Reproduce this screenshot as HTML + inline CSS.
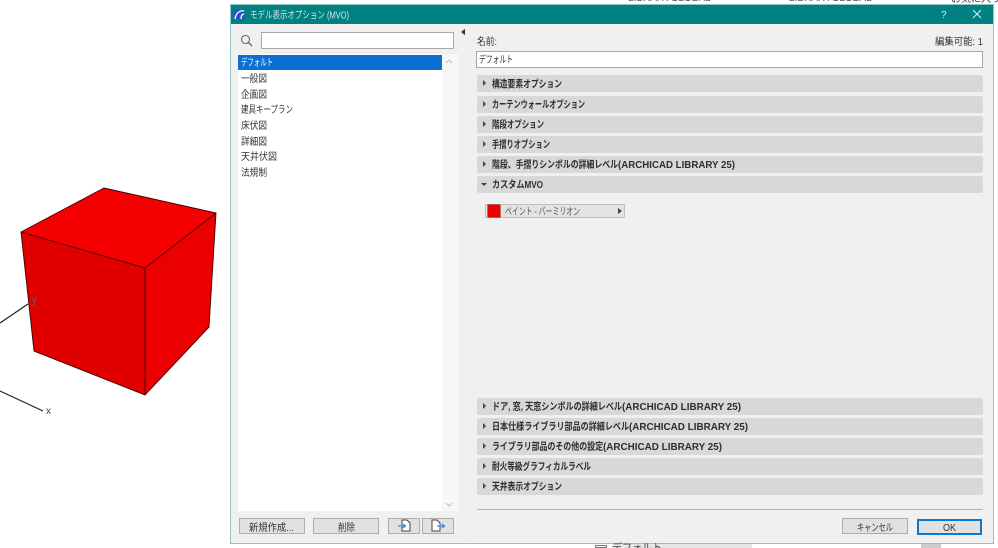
<!DOCTYPE html>
<html lang="ja"><head><meta charset="utf-8">
<style>
html,body{margin:0;padding:0;background:#fff}
#p{position:relative;width:998px;height:548px;overflow:hidden;background:#fff;font-family:"Liberation Sans","Noto Sans CJK JP",sans-serif;font-size:10px;color:#333}
.a{position:absolute}
.s{position:absolute;left:477px;width:506px;height:17px;background:#d8d8d8;border-radius:2px}
.s i{position:absolute;left:6px;top:5px;width:0;height:0;border-left:3.5px solid #444;border-top:3px solid transparent;border-bottom:3px solid transparent}
.btn{position:absolute;box-sizing:border-box;height:16px;top:518px;background:#e1e1e1;border:1px solid #adadad}
#tx{position:absolute;left:0;top:0;filter:blur(.3px)}
#tx text{font-family:"Liberation Sans","Noto Sans CJK JP",sans-serif;font-size:10px;fill:#333}
#tx .b{font-weight:700;fill:#2e2e2e}
</style></head><body><div id="p">
<svg class="a" style="left:0;top:0" width="230" height="548">
<path d="M104 188L216 213L145 268L21 232Z" fill="#f50000"/>
<path d="M21 232L145 268V395L34 351Z" fill="#e00000"/>
<path d="M145 268L216 213L209 327L145 395Z" fill="#ea0000"/>
<path d="M21 232L104 188L216 213L209 327L145 395L34 351ZM21 232L145 268L216 213M145 268V395" fill="none" stroke="#400" stroke-width=".9"/>
<path d="M0 323L28 304M0 391L43 411" stroke="#222" stroke-width="1.2" fill="none"/>
<text x="46" y="414" font-family="Liberation Sans" font-size="10" fill="#444">x</text>
<text x="32" y="303" font-family="Liberation Sans" font-size="10" fill="#666">y</text>
</svg>
<div class="a" style="left:612px;top:544px;width:140px;height:4px;background:#e6e6e6"></div>
<div class="a" style="left:595px;top:545px;width:12px;height:3px;border:1px solid #777;box-sizing:border-box"></div>
<div class="a" style="left:921px;top:544px;width:20px;height:4px;background:#ccc"></div>

<div class="a" style="left:230px;top:4px;width:764px;height:540px;box-sizing:border-box;border:1px solid #8cc6c6;background:#f0f0f0"></div>
<div class="a" style="left:231px;top:5px;width:762px;height:19px;background:#008080"></div>
<svg class="a" style="left:233px;top:8px" width="14" height="13"><rect x="1" y="2" width="10" height="9" fill="#2a50c8"/><path d="M2 11C3 4 8 2 11 3M8 11C8 8 9 6 11 6" stroke="#fff" stroke-width="1.3" fill="none"/></svg>
<svg class="a" style="left:972px;top:9px" width="10" height="10"><path d="M1 1L9 9M9 1L1 9" stroke="#e0f0f0" stroke-width="1"/></svg>

<svg class="a" style="left:240px;top:34px" width="14" height="14"><circle cx="5.5" cy="5.500" r="4" fill="none" stroke="#666" stroke-width="1.1"/><path d="M8.500 8.500L12 12" stroke="#666" stroke-width="1.300"/></svg>
<div class="a" style="left:261px;top:32px;width:193px;height:17px;box-sizing:border-box;background:#fff;border:1px solid #a8a8a8"></div>
<div class="a" style="left:238px;top:54px;width:204px;height:457px;background:#fff"></div>
<div class="a" style="left:442px;top:54px;width:17px;height:457px;background:#f7f7f7"></div>
<div class="a" style="left:238px;top:55px;width:204px;height:15px;background:#0a70d2"></div>
<svg class="a" style="left:445px;top:58px" width="10" height="6"><path d="M1 5L4 2L7 5" stroke="#c0c0c0" fill="none"/></svg>
<svg class="a" style="left:445px;top:502px" width="10" height="6"><path d="M1 1L4 4L7 1" stroke="#c0c0c0" fill="none"/></svg>

<div class="btn" style="left:239px;width:66px"></div>
<div class="btn" style="left:313px;width:66px"></div>
<div class="btn" style="left:388px;width:32px"></div>
<div class="btn" style="left:422px;width:32px"></div>
<svg class="a" style="left:396px;top:519px" width="18" height="14"><path d="M6 1H11L14 4V12H6Z" fill="#fff" stroke="#444"/><path d="M2 7H9M7 5L9.500 7L7 9" stroke="#3a8ee0" stroke-width="1.300" fill="none"/></svg>
<svg class="a" style="left:430px;top:519px" width="18" height="14"><path d="M2 1H7L10 4V12H2Z" fill="#fff" stroke="#444"/><path d="M7 7H14M12 5L14.500 7L12 9" stroke="#3a8ee0" stroke-width="1.300" fill="none"/></svg>

<div class="a" style="left:461px;top:29px;width:0;height:0;border-right:4px solid #333;border-top:3px solid transparent;border-bottom:3px solid transparent"></div>
<div class="a" style="left:465px;top:25px;width:1px;height:518px;background:#ececec"></div>

<div class="a" style="left:476px;top:51px;width:507px;height:17px;box-sizing:border-box;background:#fff;border:1px solid #a8a8a8"></div>

<div class="s" style="top:75px"><i></i></div>
<div class="s" style="top:96px"><i></i></div>
<div class="s" style="top:116px"><i></i></div>
<div class="s" style="top:136px"><i></i></div>
<div class="s" style="top:156px"><i></i></div>
<div class="s" style="top:176px"><i style="left:4px;top:7px;border-left:3px solid transparent;border-right:3px solid transparent;border-top:3.500px solid #444;border-bottom:0"></i></div>

<div class="a" style="left:485px;top:204px;width:140px;height:14px;box-sizing:border-box;background:#e3e3e3;border:1px solid #c0c0c0"></div>
<div class="a" style="left:488px;top:205px;width:12px;height:12px;background:#f00000;box-shadow:0 0 0 .5px #800"></div>
<div class="a" style="left:618px;top:208px;width:0;height:0;border-left:4px solid #444;border-top:3px solid transparent;border-bottom:3px solid transparent"></div>

<div class="s" style="top:398px"><i></i></div>
<div class="s" style="top:418px"><i></i></div>
<div class="s" style="top:438px"><i></i></div>
<div class="s" style="top:458px"><i></i></div>
<div class="s" style="top:478px"><i></i></div>

<div class="a" style="left:477px;top:509px;width:506px;height:1px;background:#b4b4b4"></div>
<div class="btn" style="left:842px;width:66px"></div>
<div class="btn" style="left:917px;top:519px;width:65px;border:2px solid #0a78d0"></div>

<svg id="tx" width="998" height="548">
<text x="628" y="1" style="fill:#555">LIBRARYGLOBAL</text>
<text x="789" y="1" style="fill:#555">LIBRARYGLOBAL</text>
<text x="951" y="2" style="fill:#444">お気に入り</text>
<text x="612" y="551" style="fill:#444">デフォルト</text>

<text x="250" y="18.500" textLength="99" lengthAdjust="spacingAndGlyphs" style="fill:#cfe6e6">モデル表示オプション (MVO)</text>
<text x="941" y="18" style="fill:#d8eeee">?</text>

<text x="241" y="66" textLength="32" lengthAdjust="spacingAndGlyphs" style="fill:#fff">デフォルト</text>
<text x="241" y="82" textLength="26" lengthAdjust="spacingAndGlyphs">一般図</text>
<text x="241" y="98" textLength="26" lengthAdjust="spacingAndGlyphs">企画図</text>
<text x="241" y="113" textLength="52" lengthAdjust="spacingAndGlyphs">建具キープラン</text>
<text x="241" y="129" textLength="26" lengthAdjust="spacingAndGlyphs">床伏図</text>
<text x="241" y="145" textLength="26" lengthAdjust="spacingAndGlyphs">詳細図</text>
<text x="241" y="160" textLength="36" lengthAdjust="spacingAndGlyphs">天井伏図</text>
<text x="241" y="176" textLength="26" lengthAdjust="spacingAndGlyphs">法規制</text>

<text x="249" y="531" textLength="45" lengthAdjust="spacingAndGlyphs">新規作成...</text>
<text x="338" y="531" textLength="17" lengthAdjust="spacingAndGlyphs">削除</text>
<text x="857" y="531" textLength="36" lengthAdjust="spacingAndGlyphs">キャンセル</text>
<text x="943" y="531" textLength="13" lengthAdjust="spacingAndGlyphs">OK</text>

<text x="477" y="45" textLength="20" lengthAdjust="spacingAndGlyphs">名前:</text>
<text x="935" y="45" textLength="48" lengthAdjust="spacingAndGlyphs">編集可能: 1</text>
<text x="479" y="63" textLength="34" lengthAdjust="spacingAndGlyphs">デフォルト</text>

<text class="b" x="492" y="87.500" textLength="70" lengthAdjust="spacingAndGlyphs">構造要素オプション</text>
<text class="b" x="492" y="108" textLength="93" lengthAdjust="spacingAndGlyphs">カーテンウォールオプション</text>
<text class="b" x="492" y="128" textLength="52" lengthAdjust="spacingAndGlyphs">階段オプション</text>
<text class="b" x="492" y="148" textLength="58" lengthAdjust="spacingAndGlyphs">手摺りオプション</text>
<text class="b" x="492" y="168" textLength="126" lengthAdjust="spacingAndGlyphs">階段、手摺りシンボルの詳細レベル</text>
<text class="b" x="618" y="168" textLength="117" lengthAdjust="spacingAndGlyphs">(ARCHICAD LIBRARY 25)</text>
<text class="b" x="492" y="188" textLength="51" lengthAdjust="spacingAndGlyphs">カスタムMVO</text>

<text x="505" y="215" textLength="75" lengthAdjust="spacingAndGlyphs" style="fill:#555">ペイント - バーミリオン</text>

<text class="b" x="492" y="410" textLength="130" lengthAdjust="spacingAndGlyphs">ドア, 窓, 天窓シンボルの詳細レベル</text>
<text class="b" x="622" y="410" textLength="119" lengthAdjust="spacingAndGlyphs">(ARCHICAD LIBRARY 25)</text>
<text class="b" x="492" y="430" textLength="137" lengthAdjust="spacingAndGlyphs">日本仕様ライブラリ部品の詳細レベル</text>
<text class="b" x="629" y="430" textLength="119" lengthAdjust="spacingAndGlyphs">(ARCHICAD LIBRARY 25)</text>
<text class="b" x="492" y="450" textLength="111" lengthAdjust="spacingAndGlyphs">ライブラリ部品のその他の設定</text>
<text class="b" x="603" y="450" textLength="119" lengthAdjust="spacingAndGlyphs">(ARCHICAD LIBRARY 25)</text>
<text class="b" x="492" y="470" textLength="99" lengthAdjust="spacingAndGlyphs">耐火等級グラフィカルラベル</text>
<text class="b" x="492" y="490" textLength="70" lengthAdjust="spacingAndGlyphs">天井表示オプション</text>
</svg>
</div></body></html>
